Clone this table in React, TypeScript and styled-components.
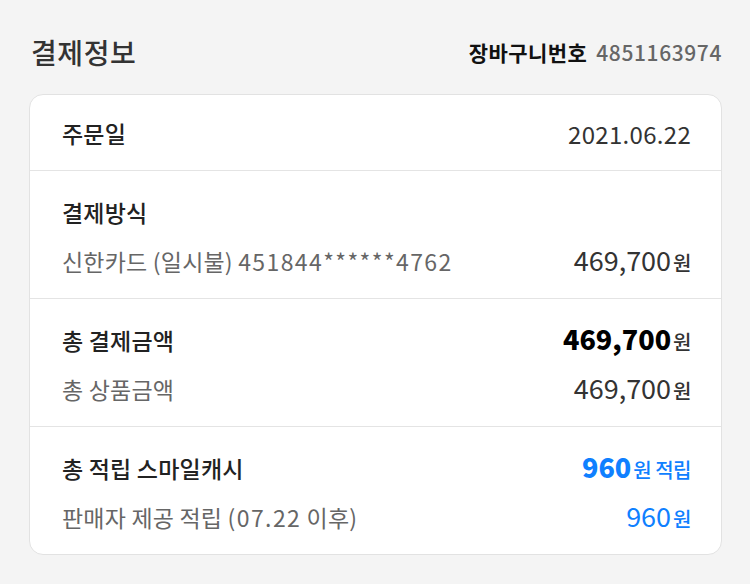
import { createGlobalStyle, styled } from "styled-components"

const GlobalStyle = createGlobalStyle`
    html, body {
        margin: 0;
        padding: 0;
        background: #f4f4f4;
    }
    body {
        font-family: "Noto Sans CJK KR", "Noto Sans", sans-serif;
        color: #222;
    }
`

type Tone = "main" | "sub"

export default function App() {
    return (
        <>
            <GlobalStyle />
            <Wrapper>
                <Header>
                    <Title>결제정보</Title>
                    <CartNo>
                        장바구니번호 <CartNum>4851163974</CartNum>
                    </CartNo>
                </Header>
                <Card>
                    <Section $single>
                        <Line>
                            <Label $tone="main">주문일</Label>
                            <DateText>2021.06.22</DateText>
                        </Line>
                    </Section>
                    <Section>
                        <Line>
                            <Label $tone="main">결제방식</Label>
                        </Line>
                        <Line>
                            <Label $tone="sub">
                                신한카드 (일시불) <Digits>451844******4762</Digits>
                            </Label>
                            <Amount>
                                469,700<Won>원</Won>
                            </Amount>
                        </Line>
                    </Section>
                    <Section>
                        <Line>
                            <Label $tone="main">총 결제금액</Label>
                            <Amount $bold>
                                469,700<Won>원</Won>
                            </Amount>
                        </Line>
                        <Line>
                            <Label $tone="sub">총 상품금액</Label>
                            <Amount>
                                469,700<Won>원</Won>
                            </Amount>
                        </Line>
                    </Section>
                    <Section>
                        <Line>
                            <Label $tone="main">총 적립 스마일캐시</Label>
                            <Amount $bold $blue>
                                960<Won $blue>원 적립</Won>
                            </Amount>
                        </Line>
                        <Line>
                            <Label $tone="sub">
                                판매자 제공 적립 <Digits>(07.22</Digits> 이후)
                            </Label>
                            <Amount $blue>
                                960<Won $blue>원</Won>
                            </Amount>
                        </Line>
                    </Section>
                </Card>
            </Wrapper>
        </>
    )
}

const Wrapper = styled.div`
    padding: 32px 28px 28px 29px;
`

const Header = styled.div`
    display: flex;
    align-items: center;
    justify-content: space-between;
    height: 40px;
    margin-bottom: 22px;
    padding-left: 2px;
`

const Title = styled.h2`
    margin: 0;
    font-size: 28px;
    font-weight: 500;
    color: #333;
    letter-spacing: 0.6px;
`

const CartNo = styled.div`
    font-size: 21px;
    font-weight: 700;
    color: #111;
    letter-spacing: 0.4px;
`

const CartNum = styled.span`
    margin-left: 4px;
    font-weight: 500;
    color: #666;
    letter-spacing: 0.6px;
`

const Card = styled.div`
    background: #fff;
    border: 1px solid #e2e2e2;
    border-radius: 14px;
    overflow: hidden;
`

const Section = styled.div<{ $single?: boolean }>`
    display: flex;
    flex-direction: column;
    gap: 9px;
    padding: ${(p) => (p.$single ? "18px" : "21px")} 30px 17px 32px;
    & + & {
        border-top: 1px solid #e4e4e4;
    }
`

const Line = styled.div`
    display: flex;
    align-items: center;
    justify-content: space-between;
    height: 40px;
`

const Label = styled.span<{ $tone: Tone }>`
    font-size: 23px;
    letter-spacing: 0.2px;
    font-weight: ${(p) => (p.$tone === "main" ? 500 : 400)};
    color: ${(p) => (p.$tone === "main" ? "#222" : "#666")};
`

const Digits = styled.span`
    letter-spacing: 1.4px;
`

const DateText = styled.span`
    font-size: 24px;
    color: #333;
    letter-spacing: 0.3px;
`

const Amount = styled.span<{ $bold?: boolean; $blue?: boolean }>`
    display: flex;
    align-items: baseline;
    margin-top: -4px;
    font-size: 27px;
    letter-spacing: 0;
    font-weight: ${(p) => (p.$bold ? 900 : 400)};
    color: ${(p) => (p.$blue ? "#0f80ff" : p.$bold ? "#000" : "#333")};
`

const Won = styled.span<{ $blue?: boolean }>`
    margin-left: 2px;
    font-size: 20px;
    font-weight: 500;
    letter-spacing: -0.5px;
    color: ${(p) => (p.$blue ? "#0f80ff" : "#333")};
`
